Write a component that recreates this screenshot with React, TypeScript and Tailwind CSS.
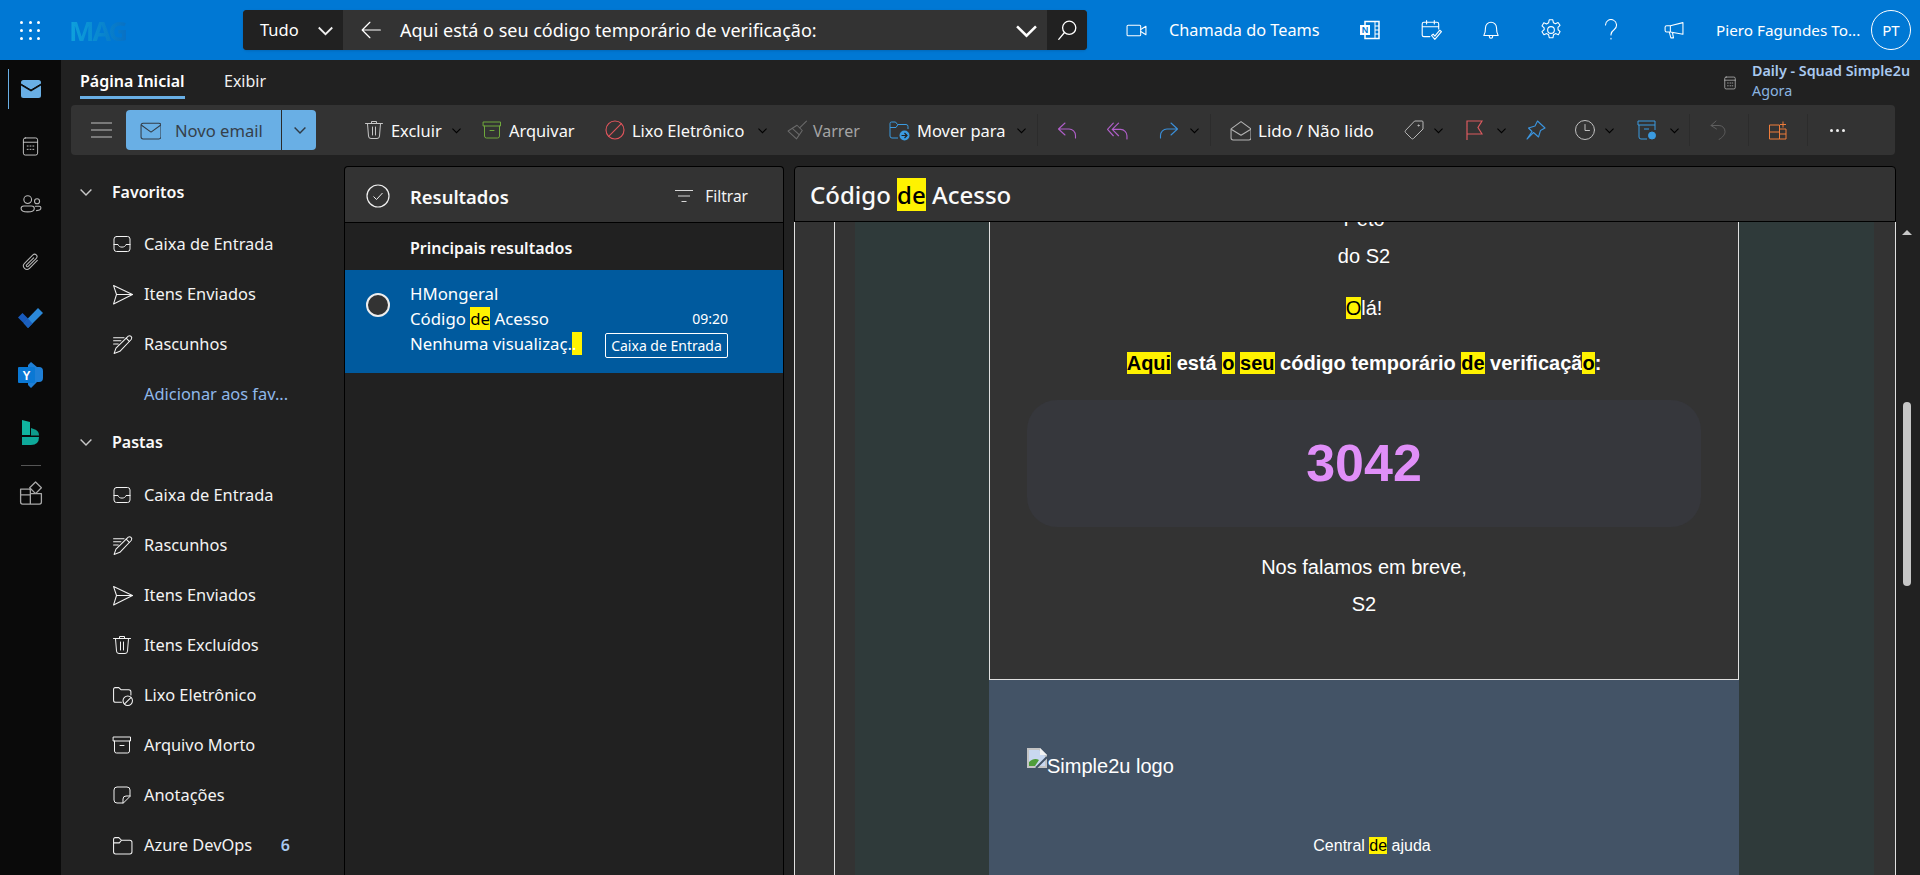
import React from "react";

type IP = { s?: number; c?: string; cn?: string; sw?: number; children: React.ReactNode };
const I = ({ s = 20, c = "", cn = "", sw = 1, children }: IP) => (
  <svg width={s} height={s} viewBox="0 0 20 20" fill="none" stroke="currentColor" strokeWidth={sw} strokeLinecap="round" strokeLinejoin="round" className={`shrink-0 ${c} ${cn}`}>
    {children}
  </svg>
);

const Inbox = () => <I s={20} c="text-[#f2f2f2]"><rect x="2" y="2.500" width="16" height="15" rx="2.500" /><path d="M2 10.500h4c.4 1.600 1.900 2.600 4 2.600s3.600-1 4-2.600h4" /></I>;
const Send = () => <I s={21} c="text-[#f2f2f2]"><path d="M1.500 1.500 19.500 10 1.500 19l2.800-9z" /><path d="M4.300 10h15.200" /></I>;
const Draft = () => <I s={21} c="text-[#f2f2f2]"><path d="M1.500 3.500h10M1.500 6.500h7M1.500 9.500h4.500" /><path d="M15.500 2a2.200 2.200 0 0 1 3 3L7.500 16.500l-5.500 2 1.800-5z" /><path d="m13.500 4 3 3" /></I>;
const Trash = ({ c = "text-[#f2f2f2]" }: { c?: string }) => <I s={20} c={c}><path d="M1.500 3.500h17M7.500 3.500V1.500h5v2M3.500 3.500l1 12.500a2.500 2.500 0 0 0 2.500 2.500h6a2.500 2.500 0 0 0 2.500-2.500l1-12.500M8.500 7v8M11.500 7v8" /></I>;
const JunkFolder = () => <I s={21} c="text-[#f2f2f2]"><path d="M9 16.500H3.500a2 2 0 0 1-2-2V4a1.500 1.500 0 0 1 1.500-1.500h3.500l2 2h7.500a2 2 0 0 1 2 2v3" /><circle cx="15" cy="15" r="4.500" /><path d="m12 18 6-6" /></I>;
const Archive = ({ c = "text-[#f2f2f2]" }: { c?: string }) => <I s={20} c={c}><path d="M1.500 2h17v4h-17z" /><path d="M2.500 6v10a2 2 0 0 0 2 2h11a2 2 0 0 0 2-2V6M8 10.500h4" /></I>;
const Note = () => <I s={20} c="text-[#f2f2f2]"><path d="M11 18H5a3 3 0 0 1-3-3V5a3 3 0 0 1 3-3h10a3 3 0 0 1 3 3v6z" /><path d="M11 18v-4a3 3 0 0 1 3-3h4" /></I>;
const Folder = () => <I s={21} c="text-[#f2f2f2]"><path d="M1.500 4a1.500 1.500 0 0 1 1.500-1.500h3.500l2.500 2.500h8a2 2 0 0 1 2 2v9a2 2 0 0 1-2 2H3.500a2 2 0 0 1-2-2zM1.500 7.500H7l2-2.500" /></I>;
const Chev = ({ c = "text-[#cfcfcf]", s = 9 }: { c?: string; s?: number }) => <svg width={s} height={s} viewBox="0 0 10 10" fill="none" stroke="currentColor" strokeWidth="1.200" className={`shrink-0 ${c}`}><path d="M.500 3 5 7.500 9.500 3" /></svg>;

const Txt = ({ cn, children }: { cn: string; children: React.ReactNode }) => <span className={`whitespace-nowrap text-[#fafafa] mt-[2px] ${cn}`}>{children}</span>;
const Sep = ({ cn }: { cn: string }) => <span className={`w-px h-[32px] bg-[#2c2c2c] shrink-0 ${cn}`} />;
const Hi = ({ children }: { children: React.ReactNode }) => <span className="bg-[#fff200] text-black">{children}</span>;

const NavRow = ({ icon, label, count }: { icon?: React.ReactNode; label: string; count?: string }) => (
  <div className="h-[50px] flex items-center">
    <span className="w-[33px] pl-[1px] flex items-center shrink-0">{icon}</span>
    <span className={`text-[16.4px] whitespace-nowrap ${icon ? "text-[#f3f3f3]" : "text-[#8fb8ea]"}`}>{label}</span>
    {count && <span className="ml-auto mr-[54px] text-[16px] font-semibold text-[#a9c9f0]">{count}</span>}
  </div>
);

const NavHead = ({ label, cn }: { label: string; cn: string }) => (
  <div className={`h-[50px] flex items-center pl-[19px] pb-[2px] ${cn}`}>
    <Chev s={12} c="text-[#c8c8c8]" />
    <span className="ml-[20px] text-[16px] font-semibold text-[#fafafa]">{label}</span>
  </div>
);

function TopBar() {
  return (
    <div className="h-[60px] bg-[#0078d4] flex items-center shrink-0 text-white">
      <div className="ml-[20px] w-[20px] grid grid-cols-3 gap-y-[5px] gap-x-[6px]">
        {[0, 1, 2, 3, 4, 5, 6, 7, 8].map((i) => <span key={i} className="w-[3px] h-[3px] bg-white rounded-full" />)}
      </div>
      <span className="ml-[29px] w-[66px] text-[27px] leading-none font-bold tracking-[-2px] whitespace-nowrap bg-linear-to-r from-[#0fa2dd] to-[#0a69bf] bg-clip-text text-transparent">MAG</span>
      <div className="ml-[108px] w-[844px] h-[40px] bg-[#333333] rounded-[4px] flex items-center overflow-hidden shadow-sm">
        <div className="w-[100px] h-full bg-[#212121] flex items-center pl-[17px]">
          <span className="text-[16.5px] w-[40px]">Tudo</span>
          <Chev s={15} c="ml-[18px] text-[#f0f0f0]" />
        </div>
        <I s={22} c="ml-[17px] text-white" sw={1.1}><path d="M18.500 10H2M9 3l-7 7 7 7" /></I>
        <span className="ml-[18px] w-[616px] text-[18px] whitespace-nowrap">Aqui está o seu código temporário de verificação:</span>
        <Chev s={21} c="text-white" />
        <div className="ml-[10px] w-[40px] h-full bg-[#212121] flex items-center justify-center">
          <I s={22} c="text-white" sw={1.2}><circle cx="12" cy="8" r="6" /><path d="M7.700 12.300 2.500 18.500" /></I>
        </div>
      </div>
      <I s={21} c="ml-[39px] text-white"><rect x="1" y="5" width="13" height="10" rx="1" /><path d="m14 9 5-3v8l-5-3" /></I>
      <span className="ml-[22px] w-[151px] text-[16.3px] whitespace-nowrap">Chamada do Teams</span>
      <svg width="20" height="20" viewBox="0 0 20 20" className="ml-[40px] shrink-0">
        <rect x="5" y="1.500" width="14" height="17" fill="none" stroke="white" strokeWidth="1.500" />
        <path d="M15 2v16M15 6h4M15 10h4M15 14h4" stroke="white" strokeWidth="1" />
        <rect x="0" y="5" width="10" height="10" fill="white" />
        <text x="5" y="13.300" fontSize="9" fontWeight="700" fill="#0078d4" textAnchor="middle" fontFamily="Liberation Sans">N</text>
      </svg>
      <I s={22} c="ml-[40px] text-white"><path d="M9 16H3.500a1.500 1.500 0 0 1-1.500-1.500v-10A1.500 1.500 0 0 1 3.500 3h12A1.500 1.500 0 0 1 17 4.500V9M2 7h15M6 1.500v3M13 1.500v3" /><path d="m10.500 15 3 3.500 6-7-1.500-1.300-4.500 5.300-1.500-1.700z" /></I>
      <I s={22} c="ml-[38px] text-white"><path d="M3.500 15c1-1.500 1.500-3 1.500-7a5 5 0 0 1 10 0c0 4 .5 5.500 1.500 7zM8.500 15v1a1.500 1.500 0 0 0 3 0v-1" /></I>
      <I s={24} c="ml-[37px] text-white" sw={0.9}><circle cx="10" cy="10" r="2.800" /><path d="M8.500 1.500h3l.5 2.400 1.700.8 2.200-1 1.600 2.400-1.700 1.800.1 1.900 1.700 1.500-1.500 2.600-2.300-.9-1.700 1-.5 2.500h-3l-.6-2.500-1.600-1-2.300 1-1.600-2.600 1.800-1.700V8.300L2.500 6.600 4 4l2.300 1 1.700-1z" /></I>
      <I s={22} c="ml-[37px] text-white"><path d="M5 5.500a5 5 0 1 1 8 4c-2 1.500-3 2.300-3 4.500v.5M10 17.500v.7" /></I>
      <I s={21} c="ml-[41px] text-white"><path d="M19 2.500v11L7 11.500H3.500a1.500 1.500 0 0 1-1.500-1.500V7a1.500 1.500 0 0 1 1.500-1.500H7zM7 5.500v6M6 11.500l1.500 5.500H10l-1-5" /></I>
      <span className="ml-[32px] w-[143px] text-[15.3px] whitespace-nowrap">Piero Fagundes To...</span>
      <span className="ml-[12px] w-[40px] h-[40px] rounded-full border border-white flex items-center justify-center text-[15px] shrink-0">PT</span>
    </div>
  );
}

function Ribbon() {
  const t = "text-[16.4px]";
  return (
    <div className="relative h-[50px] ml-[10px] w-[1824px] bg-[#333333] rounded-[4px] flex items-center shrink-0">
      <svg width="21" height="16" viewBox="0 0 21 16" className="ml-[20px] shrink-0" stroke="#c0c0c0" strokeWidth="1.200"><path d="M0 1h21M0 8h21M0 15h21" /></svg>
      <div className="ml-[14px] w-[190px] h-[40px] rounded-[4px] bg-[#69afe5] flex items-center shrink-0 text-[#2a2a2a]">
        <I s={21} c="ml-[14px] text-[#333d47]"><rect x="1" y="3" width="19" height="15" rx="2" /><path d="m1.500 5 9 6.500 9-6.500" /></I>
        <span className="ml-[14px] mt-[2px] w-[106px] text-[16.6px] whitespace-nowrap text-[#35404a]">Novo email</span>
        <span className="w-px h-full bg-[#2a2a2a]" />
        <Chev s={12} c="ml-[12px] text-[#2f3a45]" />
      </div>
      <Trash c="ml-[48px] text-[#c6c6c6]" />
      <Txt cn={`ml-[7px] w-[50px] ${t}`}>Excluir</Txt>
      <Chev c="ml-[11px]" />
      <Archive c="ml-[21px] text-[#6fa83c]" />
      <Txt cn={`ml-[7px] w-[67px] ${t}`}>Arquivar</Txt>
      <I c="ml-[29px] text-[#e0555c]" sw={1.1}><circle cx="10" cy="10" r="9" /><path d="M3.700 16.300 16.300 3.700" /></I>
      <Txt cn={`ml-[7px] w-[113px] ${t}`}>Lixo Eletrônico</Txt>
      <Chev c="ml-[13px]" />
      <I s={21} c="ml-[19px] text-[#6a6a6a]"><path d="M19.500 1 13 7.500M10.500 5 15.500 10 10 18 2 10.500z" /><path d="m6 8 6.500 6" /></I>
      <span className="ml-[6px] mt-[2px] w-[47px] text-[16px] whitespace-nowrap text-[#a4a4a4]">Varrer</span>
      <svg width="21" height="21" viewBox="0 0 21 21" fill="none" className="ml-[29px] shrink-0">
        <path d="M9 18H3a2 2 0 0 1-2-2V3.500A1.500 1.500 0 0 1 2.500 2h4l2 2.500H17a2 2 0 0 1 2 2V9M1 7.500h6l2-3" stroke="#3b9be0" />
        <circle cx="15.500" cy="15.500" r="5" fill="#3b9be0" />
        <path d="M12.500 15.500h5.500M15.500 13l2.500 2.500-2.500 2.500" stroke="#222" strokeWidth="1.200" />
      </svg>
      <Txt cn="ml-[7px] w-[89px] text-[16.5px]">Mover para</Txt>
      <Chev c="ml-[11px]" />
      <Sep cn="ml-[11px]" />
      <I c="ml-[19px] text-[#b05fc9]" sw={1.1}><path d="M8 3 1.500 9 8 15M1.500 9H12a6.500 6.500 0 0 1 6.500 6.500V18" /></I>
      <I s={21} c="ml-[30px] text-[#b05fc9]" sw={1.1}><path d="M6 3 .500 9 6 15M11 3 5 9l6 6M5 9h8a6 6 0 0 1 6 6v3" /></I>
      <I c="ml-[31px] text-[#3b8fd9]" sw={1.1}><path d="M12 3l6.500 6-6.500 6M18.500 9H8a6.500 6.500 0 0 0-6.500 6.500V18" /></I>
      <Chev c="ml-[11px]" />
      <Sep cn="ml-[11px]" />
      <I s={21} c="ml-[19px] text-[#b4b4b4]"><path d="M1 8.500 10.500 1.500l9.500 7V17a2 2 0 0 1-2 2H3a2 2 0 0 1-2-2z" /><path d="M1.500 9l9 5.500 9-5.500" /></I>
      <Txt cn="ml-[7px] w-[116px] text-[17px]">Lido / Não lido</Txt>
      <I c="ml-[30px] text-[#b8b8b8]"><path d="M11 1h7a1 1 0 0 1 1 1v7L9.500 18.500a1.500 1.500 0 0 1-2 0l-6-6a1.500 1.500 0 0 1 0-2z" /><circle cx="14.500" cy="5.500" r=".6" fill="currentColor" /></I>
      <Chev c="ml-[10px]" />
      <svg width="17" height="20" viewBox="0 0 17 20" fill="none" stroke="#dc5a5f" strokeWidth="1.200" className="ml-[23px] shrink-0"><path d="M1 20V1h15l-4 6.500 4 6.500H1" /></svg>
      <Chev c="ml-[14px]" />
      <I s={20} c="ml-[20px] text-[#3b94de]" sw={1.1}><path d="M11.500 1 19 8l-4.500 2.500L12.500 17 7.500 12.500 1 19l5-7.500L2.500 8 9 6z" /></I>
      <I c="ml-[29px] text-[#c0c0c0]"><circle cx="10" cy="10" r="9.500" /><path d="M10 4.500V10.500h4.500" /></I>
      <Chev c="ml-[10px]" />
      <svg width="20" height="21" viewBox="0 0 20 21" fill="none" stroke="#3b9be0" className="ml-[23px] shrink-0"><path d="M1 1h17v4H1zM2 5v12a2 2 0 0 0 2 2h6M18 5v5M7 9h5" /><circle cx="15" cy="15.500" r="3.500" fill="#3b9be0" /></svg>
      <Chev c="ml-[13px]" />
      <Sep cn="ml-[10px]" />
      <I s={20} c="ml-[19px] text-[#5e5e5e]"><path d="M7 1 2 5.500l5.500 3.500M2 5.500h8a6 6 0 0 1 6 6c0 3-2 5.500-6 8" /></I>
      <Sep cn="ml-[19px]" />
      <svg width="20" height="20" viewBox="0 0 20 20" fill="none" stroke="#ef7d3b" className="ml-[19px] shrink-0"><path d="M1.500 5h10v14h-10zM1.500 12h10M15 1.500v6M12 4.500h6" /><path d="M11.500 9H18v10h-6.500M11.500 14h6.500" /></svg>
      <Sep cn="ml-[19px]" />
      <span className="ml-[22px] flex gap-[3px]">{[0, 1, 2].map((i) => <span key={i} className="w-[3px] h-[3px] rounded-full bg-[#eeeeee]" />)}</span>
    </div>
  );
}

function Rail() {
  return (
    <div className="w-[61px] bg-[#0a0a0a] flex flex-col items-center shrink-0 relative">
      <span className="absolute left-[8px] top-[9px] w-[1px] h-[40px] bg-[#69afe5]" />
      <svg width="20" height="18" viewBox="0 0 20 18" className="mt-[20px]"><path d="M0 2.500A2.500 2.500 0 0 1 2.500 0h15A2.500 2.500 0 0 1 20 2.500V4l-10 6L0 4z" fill="#69afe5" /><path d="M0 5.500l10 6 10-6v10a2.500 2.500 0 0 1-2.500 2.500h-15A2.500 2.500 0 0 1 0 15.500z" fill="#69afe5" /><path d="m0 4 10 6 10-6" stroke="#0a0a0a" fill="none" /></svg>
      <I s={19} c="mt-[39px] text-[#c8c8c8]"><rect x="2.500" y="1" width="15" height="18" rx="2" /><path d="M2.500 5.500h15M6.500 9.500h1M9.500 9.500h1M12.500 9.500h1M6.500 13h1M9.500 13h1M12.500 13h1" /></I>
      <I s={22} c="mt-[37px] text-[#b8b8b8]"><circle cx="7" cy="6" r="3.500" /><circle cx="15.500" cy="7.500" r="2.300" /><path d="M1 14c0-1.500 1-2.200 2.500-2.200h7c1.500 0 2.500.7 2.500 2.200 0 2-2.500 3.200-6 3.200S1 16 1 14zM14 12h3.500c1 0 1.500.6 1.500 1.500 0 1.500-1.700 2.500-4 2.500" /></I>
      <I s={21} c="mt-[37px] text-[#b8b8b8]"><path d="M16.500 8 9 15.500a3.300 3.300 0 0 1-4.700-4.700l8-8A2.200 2.200 0 0 1 15.500 6l-7.700 7.700a1 1 0 0 1-1.500-1.500L13 5.500" /></I>
      <svg width="25" height="20" viewBox="0 0 25 20" className="mt-[35px]"><path d="M0 9.500 4.500 5 10 10.500 5.500 15z" fill="#185abd" /><path d="M10 20 5.500 15 20 0l5 5z" fill="#2b88d8" /><path d="M5.500 15 10 10.500l4.500 5L10 20z" fill="#1b5fbf" /></svg>
      <svg width="25" height="26" viewBox="0 0 25 26" className="mt-[34px]"><path d="M13 0 19 5h2a4 4 0 0 1 4 4v7a4 4 0 0 1-4 4h-2l-6 6-3-3V3z" fill="#1f7fd6" /><rect x="0" y="5" width="17" height="16" rx="1" fill="#0a78d4" /><text x="8.500" y="17.500" textAnchor="middle" fontSize="12" fontWeight="700" fill="white" fontFamily="Liberation Sans">Y</text></svg>
      <svg width="17" height="25" viewBox="0 0 17 25" className="mt-[32px]"><path d="M0 0 8 2V15H0z" fill="#10b5a0" /><path d="M9 8 13 9.500Q17 11 17 15.500H9z" fill="#0e9c8c" /><path d="M0 17H17Q17 25 9 25H0z" fill="#0ea99a" /></svg>
      <span className="mt-[20px] w-[20px] h-px bg-[#555555]" />
      <I s={26} c="mt-[14px] text-[#a8a8a8]" sw={1}><path d="M2 7h6.500a1 1 0 0 1 1 1v10.500H3.500a1.500 1.500 0 0 1-1.500-1.500V8zM9.500 10.500H18v6.500a1.500 1.500 0 0 1-1.500 1.500H9.500M2 11.500h7.500M13.500 1.500 18 6l-4.500 4.500L9 6z" /></I>
    </div>
  );
}

function ListPanel() {
  return (
    <div className="w-[440px] mt-[11px] border-x border-t border-black rounded-t-[4px] flex flex-col shrink-0">
      <div className="h-[56px] bg-[#333333] border-b border-black flex items-center rounded-t-[4px] shrink-0">
        <svg width="24" height="24" viewBox="0 0 24 24" fill="none" stroke="#f0f0f0" className="ml-[21px] mt-[2px] shrink-0"><circle cx="12" cy="12" r="11" strokeWidth="1.200" /><path d="m7.500 12.500 3 3 6-6.500" /></svg>
        <span className="ml-[20px] mt-[5px] text-[18.4px] font-semibold text-[#fafafa]">Resultados</span>
        <svg width="18" height="14" viewBox="0 0 18 14" fill="none" stroke="#d8d8d8" className="ml-auto mt-[2px] shrink-0"><path d="M0 1.500h18M3 7h12M6.500 12.500h5" strokeWidth="1.200" /></svg>
        <span className="ml-[12px] mr-[35px] mt-[5px] text-[15.500px] text-[#f3f3f3]">Filtrar</span>
      </div>
      <div className="h-[47px] flex items-center pl-[65px] pt-[3px] text-[16px] font-semibold text-[#fafafa]">Principais resultados</div>
      <div className="h-[103px] bg-[#005a9e] flex text-white shrink-0">
        <span className="ml-[21px] mt-[23px] w-[24px] h-[24px] rounded-full border-2 border-[#eeeeee] bg-[#333333] shrink-0" />
        <div className="ml-[20px] mt-[11px] w-[318px] flex flex-col text-[16.8px]">
          <div className="h-[25px] leading-[25px]">HMongeral</div>
          <div className="h-[25px] flex justify-between items-center">
            <span>Código <Hi>de</Hi> Acesso</span>
            <span className="text-[14px]">09:20</span>
          </div>
          <div className="h-[25px] flex justify-between items-center">
            <span className="whitespace-nowrap leading-[23px]">Nenhuma visualizaç.<span className="inline-block w-[10px] bg-[#fff200] text-white">.</span></span>
            <span className="mt-[4px] h-[25px] w-[123px] rounded-[2px] border border-white text-[14px] flex items-center justify-center whitespace-nowrap">Caixa de Entrada</span>
          </div>
        </div>
      </div>
    </div>
  );
}

function Email() {
  const ls = "[font-family:'Liberation_Sans',sans-serif]";
  return (
    <div className={`flex-1 min-h-0 overflow-hidden flex border-x border-[#e0e0e0] bg-[#333333] text-white ${ls}`}>
      <div className="w-[40px] shrink-0 border-r border-[#e0e0e0]" />
      <div className="w-[20px] shrink-0" />
      <div className="w-[134px] shrink-0 bg-[#2f3a3a]" />
      <div className="w-[750px] shrink-0 flex flex-col">
        <div className="h-[458px] shrink-0 border-x border-b border-[#e0e0e0] flex flex-col items-center text-[20px] leading-[37px]">
          <div className="-mt-[21px] h-[37px]">Peto</div>
          <div className="h-[37px]">do S2</div>
          <div className="mt-[15px] h-[37px]"><Hi>O</Hi>lá!</div>
          <div className="mt-[18px] h-[37px] text-[20px] font-bold whitespace-nowrap"><Hi>Aqui</Hi> está <Hi>o</Hi> <Hi>seu</Hi> código temporário <Hi>de</Hi> verificaçã<Hi>o</Hi>:</div>
          <div className="mt-[18px] w-[674px] h-[127px] shrink-0 rounded-[30px] bg-[#36373c] flex items-center justify-center text-[52px] font-bold text-[#e08ff8]">3042</div>
          <div className="mt-[22px] h-[37px]">Nos falamos em breve,</div>
          <div className="h-[37px]">S2</div>
        </div>
        <div className="flex-1 bg-[#435366] flex flex-col">
          <div className="mt-[68px] ml-[38px] flex items-start h-[40px]">
            <svg width="20" height="20" viewBox="0 0 20 20" className="shrink-0">
              <path d="M0 0h13l7 7v13H0z" fill="#c4c4c4" />
              <path d="M2 2h10l6 6v10H2z" fill="#c9d8f0" />
              <path d="M2 18v-4c3-3 7-4 10-2l-4 6z" fill="#4f9d3a" />
              <path d="M13 0v7h7z" fill="#f2f2f2" />
              <path d="M9 20 20 9" stroke="#435366" strokeWidth="2" />
            </svg>
            <span className="text-[20px] leading-[37px] whitespace-nowrap">Simple2u logo</span>
          </div>
          <div className="mt-[46px] pl-[16px] text-center text-[16px] leading-[24px]">Central <Hi>de</Hi> ajuda</div>
        </div>
      </div>
      <div className="w-[135px] shrink-0 bg-[#2f3a3a]" />
    </div>
  );
}

export default function App() {
  return (
    <div className="w-[1920px] h-[875px] overflow-hidden flex flex-col bg-[#212121] [font-family:'Noto_Sans',sans-serif]">
      <TopBar />
      <div className="flex-1 min-h-0 flex">
        <Rail />
        <div className="flex-1 min-w-0 flex flex-col">
          <div className="h-[45px] shrink-0 flex">
            <div className="ml-[19px] mt-[8px] pt-[1px] h-[31px] border-b-[3px] border-[#69afe5] text-[16px] font-semibold text-white whitespace-nowrap w-[105px]">Página Inicial</div>
            <div className="ml-[39px] mt-[9px] text-[16px] text-[#f0f0f0]">Exibir</div>
            <I s={14} c="ml-auto mt-[16px] text-[#c8c8c8]"><rect x="2.500" y="1.500" width="15" height="17" rx="2" /><path d="M2.500 6h15M6.500 10h1M10 10h1M13 10h1M6.500 14h1M10 14h1M13 14h1" /></I>
            <div className="ml-[15px] mr-[19px] mt-[1px] flex flex-col leading-[20px] w-[149px]">
              <span className="font-semibold text-[#a9c9f0] whitespace-nowrap text-[14.3px]">Daily - Squad Simple2u</span>
              <span className="text-[#8ab4e0] text-[14.3px]">Agora</span>
            </div>
          </div>
          <Ribbon />
          <div className="flex-1 min-h-0 flex">
            <div className="w-[283px] shrink-0 pt-[13px] pl-[50px] pr-0 flex flex-col">
              <NavHead label="Favoritos" cn="-ml-[50px] mb-px" />
              <NavRow icon={<Inbox />} label="Caixa de Entrada" />
              <NavRow icon={<Send />} label="Itens Enviados" />
              <NavRow icon={<Draft />} label="Rascunhos" />
              <NavRow label="Adicionar aos fav..." />
              <NavHead label="Pastas" cn="-ml-[50px] -mt-px mb-[2px]" />
              <NavRow icon={<Inbox />} label="Caixa de Entrada" />
              <NavRow icon={<Draft />} label="Rascunhos" />
              <NavRow icon={<Send />} label="Itens Enviados" />
              <NavRow icon={<Trash />} label="Itens Excluídos" />
              <NavRow icon={<JunkFolder />} label="Lixo Eletrônico" />
              <NavRow icon={<Archive />} label="Arquivo Morto" />
              <NavRow icon={<Note />} label="Anotações" />
              <NavRow icon={<Folder />} label="Azure DevOps" count="6" />
            </div>
            <ListPanel />
            <div className="w-[10px] shrink-0" />
            <div className="w-[1102px] mt-[11px] shrink-0 flex flex-col">
              <div className="h-[56px] shrink-0 bg-[#333333] border border-black rounded-t-[4px] flex items-center pl-[15px] pt-[2px] text-[24px] font-medium text-[#fafafa] whitespace-nowrap">
                <span>Código <Hi>de</Hi> Acesso</span>
              </div>
              <Email />
            </div>
            <div className="w-[24px] shrink-0 flex flex-col items-center relative -left-[1px] pt-[75px]">
              <span className="w-0 h-0 border-x-[5px] border-x-transparent border-b-[5px] border-b-[#c8c8c8]" />
              <span className="mt-[167px] w-[8px] h-[184px] rounded-full bg-[#c6c6c6]" />
            </div>
          </div>
        </div>
      </div>
    </div>
  );
}
